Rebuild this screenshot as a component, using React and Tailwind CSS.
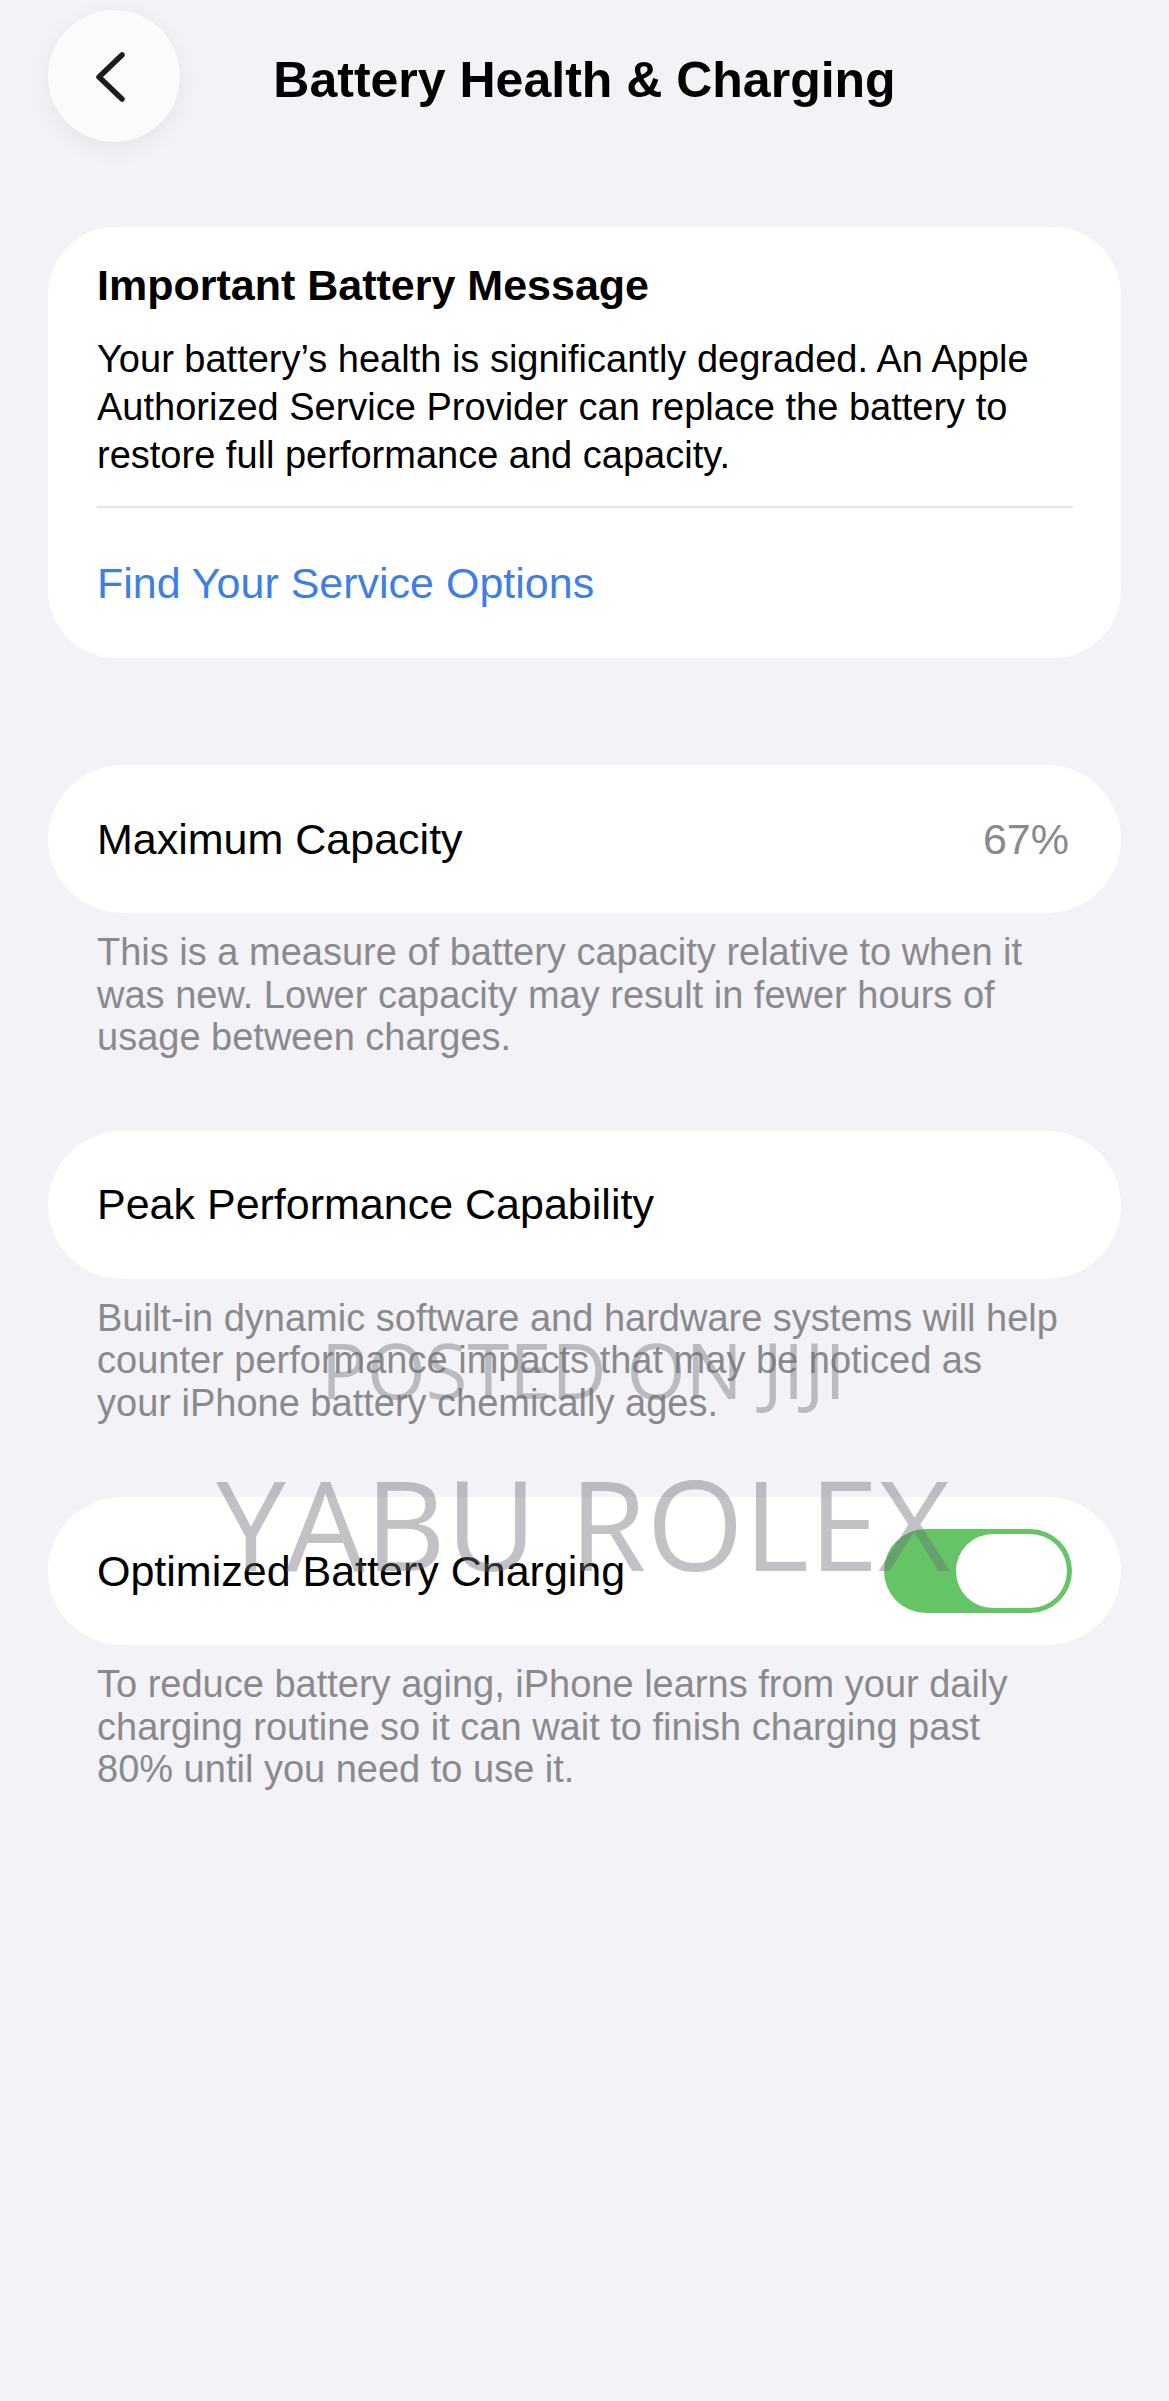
import React from 'react';

// iOS-ish settings page, sized for the 1169px wide capture
const sans = "font-['Liberation_Sans',Arial,sans-serif]";

const Footer = ({ children, className = '' }) => (
    <p className={`ml-[49px] max-w-[965px] text-[38px] leading-[42.5px] text-[#8a8a8e] ${className}`}>
        {children}
    </p>
);

const Toggle = () => (
    <div className="flex h-[84px] w-[188px] items-center justify-end rounded-full bg-[#65c466] p-[5px]">
        <div className="h-[74px] w-[111px] rounded-full bg-white" />
    </div>
);

const App = () => {
    return (
        <div className={`relative min-h-[2401px] bg-[#f2f2f7] text-black ${sans}`}>
            {/* Header */}
            <header className="grid grid-cols-[132px_1fr_132px] items-center px-[48px] pt-[10px]">
                <button className="h-[132px] w-[132px] rounded-full bg-[#fbfbfd] shadow-[0_6px_24px_rgba(0,0,0,0.06)]">
                    <svg viewBox="0 0 132 132" className="h-full w-full">
                        <path
                            d="M74 45 L51 67 L74 89"
                            fill="none"
                            stroke="#1c1c1e"
                            strokeWidth="5.5"
                            strokeLinecap="round"
                            strokeLinejoin="round"
                        />
                    </svg>
                </button>
                <h1 className="pt-[8px] text-center text-[50px] font-bold leading-[60px]">
                    Battery Health &amp; Charging
                </h1>
                <div />
            </header>

            <main className="px-[48px] pt-[85px]">
                {/* Important message */}
                <section className="rounded-[68px] bg-white pb-[49px] pl-[49px] pr-[48px] pt-[32px]">
                    <h2 className="text-[43px] font-bold leading-[52px]">Important Battery Message</h2>
                    <p className="mt-[24px] text-[38px] leading-[48px]">
                        Your battery’s health is significantly degraded. An Apple Authorized Service Provider can
                        replace the battery to restore full performance and capacity.
                    </p>
                    <div className="mt-[27px] h-[2px] bg-[#e3e3e8]" />
                    <a className="mt-[49px] block text-[43px] leading-[52px] text-[#3d7fe6]">
                        Find Your Service Options
                    </a>
                </section>

                {/* Maximum capacity */}
                <section className="mt-[107px] flex h-[148px] items-center justify-between rounded-full bg-white pl-[49px] pr-[52px]">
                    <span className="text-[43px]">Maximum Capacity</span>
                    <span className="text-[43px] text-[#8a8a8e]">67%</span>
                </section>
                <Footer className="mt-[18px]">
                    This is a measure of battery capacity relative to when it was new. Lower capacity may result
                    in fewer hours of usage between charges.
                </Footer>

                {/* Peak performance */}
                <section className="mt-[72px] flex h-[148px] items-center rounded-full bg-white pl-[49px] pr-[52px]">
                    <span className="text-[43px]">Peak Performance Capability</span>
                </section>
                <Footer className="mt-[18px]">
                    Built-in dynamic software and hardware systems will help counter performance impacts that may
                    be noticed as your iPhone battery chemically ages.
                </Footer>

                {/* Optimized charging */}
                <section className="mt-[73px] flex h-[148px] items-center justify-between rounded-full bg-white pl-[49px] pr-[49px]">
                    <span className="text-[43px]">Optimized Battery Charging</span>
                    <Toggle />
                </section>
                <Footer className="mt-[18px]">
                    To reduce battery aging, iPhone learns from your daily charging routine so it can wait to
                    finish charging past 80% until you need to use it.
                </Footer>
            </main>

            {/* Watermarks */}
            <div className="pointer-events-none absolute left-[321px] top-[1332px] whitespace-nowrap font-['Open_Sans',sans-serif] text-[76px] leading-none text-[rgba(110,110,120,0.42)]">
                POSTED ON JIJI
            </div>
            <div className="pointer-events-none absolute left-[216px] top-[1460px] whitespace-nowrap font-['Open_Sans',sans-serif] text-[125px] leading-none text-[rgba(110,110,120,0.42)]">
                YABU ROLEX
            </div>
        </div>
    );
};

export default App;
